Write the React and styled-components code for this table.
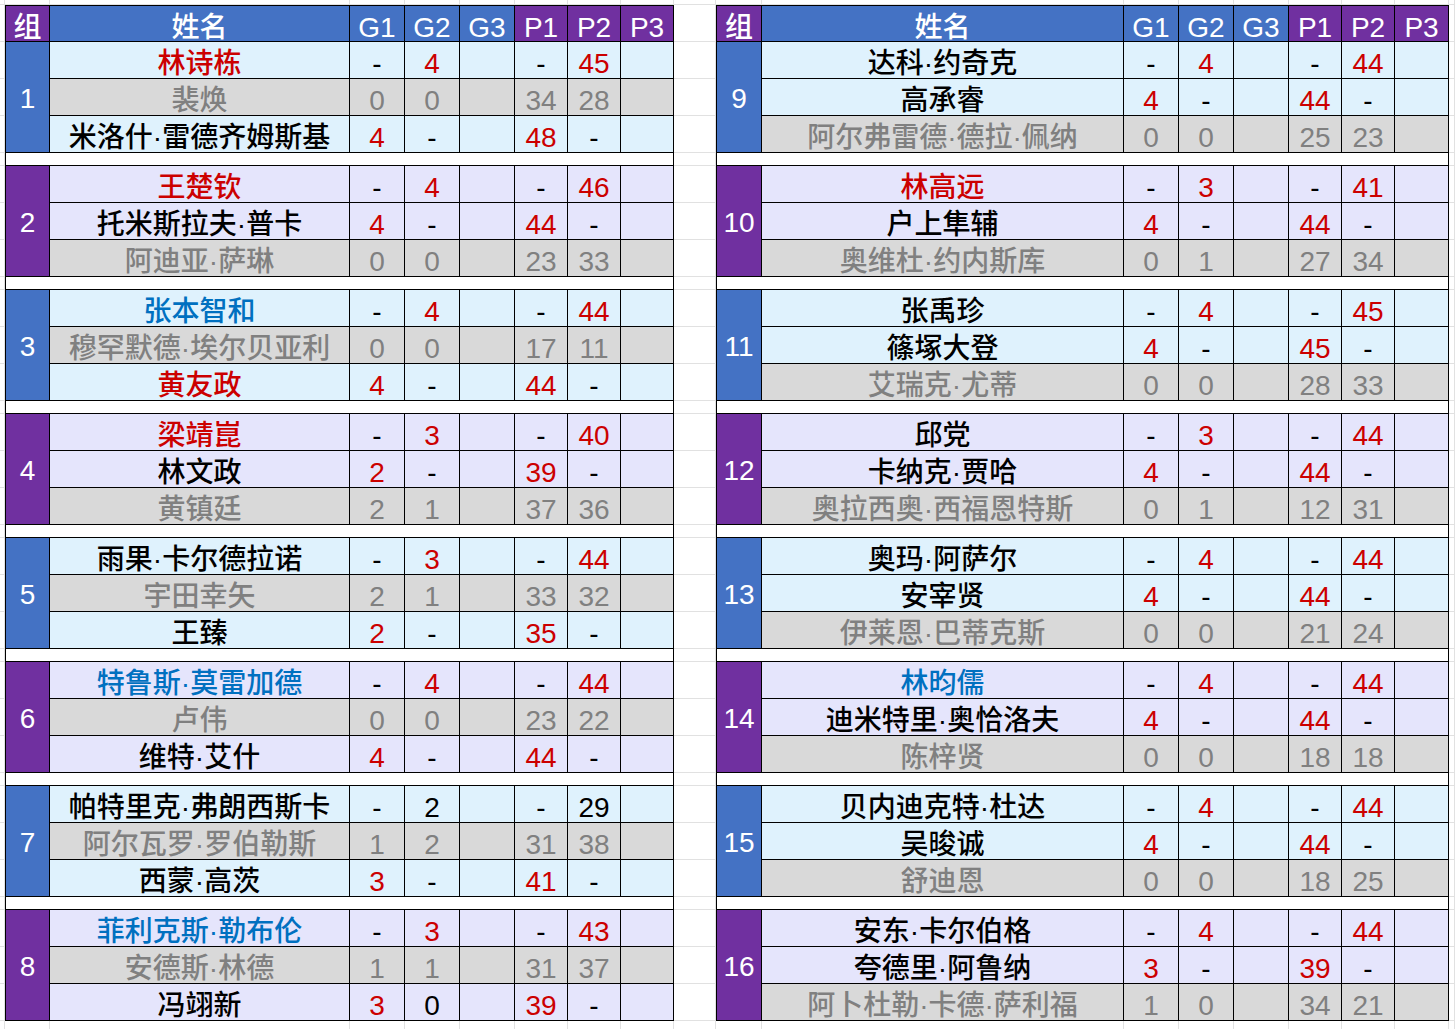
import React from "react";
import styled, { createGlobalStyle } from "styled-components";

const GlobalStyle = createGlobalStyle`
  html, body {
    margin: 0;
    padding: 0;
    background: #fff;
  }
  * {
    box-sizing: border-box;
  }
`;

const BLUE = "#4472c4";
const PURPLE = "#7030a0";
const LIGHT_BLUE = "#dff2fd";
const LAVENDER = "#e5e5fc";
const GREY_BG = "#d9d9d9";
const GRID = "#e1e1e1";

const textColors = {
  r: "#cc0000",
  b: "#0070c0",
  k: "#000000",
  g: "#808080",
  w: "#ffffff",
};

const COLS = "45px 300px 55px 55px 55px 53px 53px 53px";
const COLS_RIGHT = "46px 362px 55px 55px 55px 53px 53px 54px";

const Sheet = styled.div`
  display: grid;
  grid-template-columns: 5px ${COLS} 42px ${COLS_RIGHT} 1fr;
  grid-template-rows: 5px 37px repeat(8, 37px 37px 37px 13px);
  grid-auto-rows: 37px;
  height: 1029px;
  overflow: hidden;
  font-family: "Liberation Sans", "Noto Sans CJK SC", sans-serif;
`;

const Blank = styled.div`
  border-right: 1px solid ${GRID};
  border-bottom: 1px solid ${GRID};
`;

const Table = styled.div`
  grid-column: ${(p) => p.$col} / span 8;
  grid-row: 2 / span 32;
  display: grid;
  grid-template-columns: ${(p) => p.$cols};
  grid-template-rows: 37px repeat(7, 37px 37px 37px 13px) 37px 37px 37px;
  background: #fff;
`;

const Cell = styled.div`
  border-right: 1px solid #000;
  border-bottom: 1px solid #000;
  border-left: ${(p) => (p.$first ? "1px solid #000" : "none")};
  border-top: ${(p) => (p.$top ? "1px solid #000" : "none")};
  background: ${(p) => p.$bg};
  color: ${(p) => textColors[p.$tone] || "#000"};
  font-size: 28px;
  font-weight: 500;
  line-height: 30px;
  padding-top: 7px;
  text-align: center;
  white-space: nowrap;
  overflow: hidden;
`;

const GroupCell = styled(Cell)`
  grid-row: span 3;
  display: flex;
  align-items: center;
  justify-content: center;
  padding-top: 3px;
`;

const Gap = styled.div`
  grid-column: 1 / -1;
  background: #fff;
  border-left: 1px solid #000;
  border-right: 1px solid #000;
  border-bottom: 1px solid #000;
`;

const leftGroups = [
  [1, ["林诗栋|r|-,4,,-,45,", "裴焕|g|0,0,,34,28,", "米洛什·雷德齐姆斯基|k|4,-,,48,-,"]],
  [2, ["王楚钦|r|-,4,,-,46,", "托米斯拉夫·普卡|k|4,-,,44,-,", "阿迪亚·萨琳|g|0,0,,23,33,"]],
  [3, ["张本智和|b|-,4,,-,44,", "穆罕默德·埃尔贝亚利|g|0,0,,17,11,", "黄友政|r|4,-,,44,-,"]],
  [4, ["梁靖崑|r|-,3,,-,40,", "林文政|k|2,-,,39,-,", "黄镇廷|g|2,1,,37,36,"]],
  [5, ["雨果·卡尔德拉诺|k|-,3,,-,44,", "宇田幸矢|g|2,1,,33,32,", "王臻|k|2,-,,35,-,"]],
  [6, ["特鲁斯·莫雷加德|b|-,4,,-,44,", "卢伟|g|0,0,,23,22,", "维特·艾什|k|4,-,,44,-,"]],
  [7, ["帕特里克·弗朗西斯卡|k|-,*2,,-,*29,", "阿尔瓦罗·罗伯勒斯|g|1,2,,31,38,", "西蒙·高茨|k|3,-,,41,-,"]],
  [8, ["菲利克斯·勒布伦|b|-,3,,-,43,", "安德斯·林德|g|1,1,,31,37,", "冯翊新|k|3,*0,,39,-,"]],
];

const rightGroups = [
  [9, ["达科·约奇克|k|-,4,,-,44,", "高承睿|k|4,-,,44,-,", "阿尔弗雷德·德拉·佩纳|g|0,0,,25,23,"]],
  [10, ["林高远|r|-,3,,-,41,", "户上隼辅|k|4,-,,44,-,", "奥维杜·约内斯库|g|0,1,,27,34,"]],
  [11, ["张禹珍|k|-,4,,-,45,", "篠塚大登|k|4,-,,45,-,", "艾瑞克·尤蒂|g|0,0,,28,33,"]],
  [12, ["邱党|k|-,3,,-,44,", "卡纳克·贾哈|k|4,-,,44,-,", "奥拉西奥·西福恩特斯|g|0,1,,12,31,"]],
  [13, ["奥玛·阿萨尔|k|-,4,,-,44,", "安宰贤|k|4,-,,44,-,", "伊莱恩·巴蒂克斯|g|0,0,,21,24,"]],
  [14, ["林昀儒|b|-,4,,-,44,", "迪米特里·奥恰洛夫|k|4,-,,44,-,", "陈梓贤|g|0,0,,18,18,"]],
  [15, ["贝内迪克特·杜达|k|-,4,,-,44,", "吴晙诚|k|4,-,,44,-,", "舒迪恩|g|0,0,,18,25,"]],
  [16, ["安东·卡尔伯格|k|-,4,,-,44,", "夸德里·阿鲁纳|k|3,-,,39,-,", "阿卜杜勒·卡德·萨利福|g|1,0,,34,21,"]],
];

const headers = [
  ["组", PURPLE],
  ["姓名", BLUE],
  ["G1", BLUE],
  ["G2", BLUE],
  ["G3", BLUE],
  ["P1", PURPLE],
  ["P2", PURPLE],
  ["P3", PURPLE],
];

// value tone: grey row -> grey, "-" -> black, "*" prefix -> black, else red
const valueTone = (v, grey) => {
  if (grey) return "g";
  if (v === "-" || v.startsWith("*")) return "k";
  return "r";
};

const PlayerRow = ({ line, bg }) => {
  const [name, tone, vals] = line.split("|");
  const grey = tone === "g";
  const rowBg = grey ? GREY_BG : bg;
  return (
    <>
      <Cell $bg={rowBg} $tone={tone}>
        {name}
      </Cell>
      {vals.split(",").map((v, i) => (
        <Cell key={i} $bg={rowBg} $tone={valueTone(v, grey)}>
          {v.replace("*", "")}
        </Cell>
      ))}
    </>
  );
};

const GroupTable = ({ groups, col, cols }) => (
  <Table $col={col} $cols={cols}>
    {headers.map(([label, bg], i) => (
      <Cell key={label} $top $first={i === 0} $bg={bg} $tone="w">
        {label}
      </Cell>
    ))}
    {groups.map(([num, rows], gi) => {
      const odd = gi % 2 === 0;
      const bg = odd ? LIGHT_BLUE : LAVENDER;
      return (
        <React.Fragment key={num}>
          <GroupCell $first $bg={odd ? BLUE : PURPLE} $tone="w">
            {num}
          </GroupCell>
          {rows.map((line, ri) => (
            <PlayerRow key={ri} line={line} bg={bg} />
          ))}
          {gi < groups.length - 1 && <Gap />}
        </React.Fragment>
      );
    })}
  </Table>
);

const App = () => {
  const blanks = Array.from({ length: 34 * 19 });
  return (
    <>
      <GlobalStyle />
      <Sheet>
        <GroupTable groups={leftGroups} col={2} cols={COLS} />
        <GroupTable groups={rightGroups} col={11} cols={COLS_RIGHT} />
        {blanks.map((_, i) => (
          <Blank key={i} />
        ))}
      </Sheet>
    </>
  );
};

export default App;
